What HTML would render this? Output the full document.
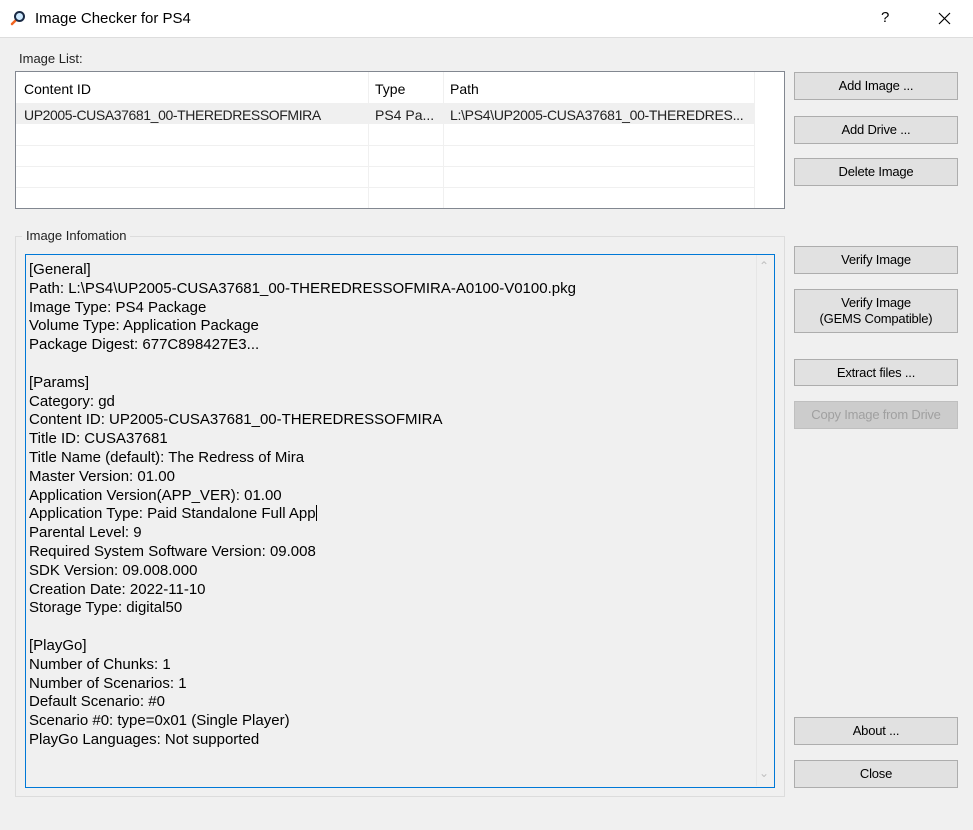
<!DOCTYPE html>
<html><head><meta charset="utf-8"><style>
*{margin:0;padding:0;box-sizing:border-box}
body{width:973px;height:830px;background:#f0f0f0;font-family:"Liberation Sans",sans-serif;color:#000;position:relative;overflow:hidden;font-size:13px}
.a{position:absolute}
.title{left:0;top:0;width:973px;height:38px;background:#fff;border-bottom:1px solid #ddd}
.btn{position:absolute;left:794px;width:164px;background:#e1e1e1;border:1px solid #adadad;text-align:center;font-size:13px;display:flex;align-items:center;justify-content:center;line-height:16px;letter-spacing:-0.2px}
.list{left:15px;top:71px;width:770px;height:138px;background:#fff;border:1px solid #828790}
.vl{position:absolute;top:0;width:1px;height:136px;background:#f0f0f0}
.hl{position:absolute;left:0;width:738px;height:1px;background:#f0f0f0}
.txt{left:25px;top:254px;width:750px;height:534px;border:1px solid #0078d7;background:#f0f0f0;padding:6px 0 0 3px;font-size:15px;line-height:18.8px;white-space:pre}
</style></head><body>
<div class="a title"></div>
<svg class="a" style="left:10px;top:10px" width="16" height="16" viewBox="0 0 16 16"><line x1="2" y1="14" x2="6" y2="10" stroke="#f26522" stroke-width="2.5" stroke-linecap="round"/><circle cx="9.5" cy="6.5" r="4.5" fill="#cfeaff" stroke="#1a2a44" stroke-width="2"/></svg>
<div class="a" style="left:35px;top:10px;font-size:15px">Image Checker for PS4</div>
<div class="a" style="left:881px;top:9px;font-size:15px">?</div>
<svg class="a" style="left:938px;top:12px" width="13" height="13"><path d="M1 1L12 12M12 1L1 12" stroke="#000" stroke-width="1.2"/></svg>
<div class="a" style="left:19px;top:51px;font-size:13px;color:#222">Image List:</div>
<div class="a list">
<div class="a" style="left:0;top:31px;width:738px;height:21px;background:#f0f0f0"></div>
<div class="vl" style="left:352px"></div><div class="vl" style="left:427px"></div><div class="vl" style="left:738px"></div>
<div class="hl" style="top:73px"></div><div class="hl" style="top:94px"></div><div class="hl" style="top:115px"></div>
<div class="a" style="left:8px;top:9px;font-size:14px">Content ID</div>
<div class="a" style="left:359px;top:9px;font-size:14px">Type</div>
<div class="a" style="left:434px;top:9px;font-size:14px">Path</div>
<div class="a" style="left:8px;top:35px;font-size:14px;color:#222;letter-spacing:-0.4px">UP2005-CUSA37681_00-THEREDRESSOFMIRA</div>
<div class="a" style="left:359px;top:35px;font-size:14px;color:#222">PS4 Pa...</div>
<div class="a" style="left:434px;top:35px;font-size:14px;color:#222;letter-spacing:-0.3px">L:\PS4\UP2005-CUSA37681_00-THEREDRES...</div>
</div>
<div class="a" style="left:15px;top:236px;width:770px;height:561px;border:1px solid #dcdcdc"></div>
<div class="a" style="left:22px;top:228px;padding:0 4px;background:#f0f0f0;font-size:13px;color:#222">Image Infomation</div>
<div class="a txt">[General]
Path: L:\PS4\UP2005-CUSA37681_00-THEREDRESSOFMIRA-A0100-V0100.pkg
Image Type: PS4 Package
Volume Type: Application Package
Package Digest: 677C898427E3...

[Params]
Category: gd
Content ID: UP2005-CUSA37681_00-THEREDRESSOFMIRA
Title ID: CUSA37681
Title Name (default): The Redress of Mira
Master Version: 01.00
Application Version(APP_VER): 01.00
Application Type: Paid Standalone Full App<span style="display:inline-block;width:1px;height:16px;background:#000;vertical-align:-3px"></span>
Parental Level: 9
Required System Software Version: 09.008
SDK Version: 09.008.000
Creation Date: 2022-11-10
Storage Type: digital50

[PlayGo]
Number of Chunks: 1
Number of Scenarios: 1
Default Scenario: #0
Scenario #0: type=0x01 (Single Player)
PlayGo Languages: Not supported</div>
<div class="a" style="left:756px;top:255px;width:1px;height:531px;background:#e6e6e6"></div>
<div class="a" style="left:759px;top:259px;color:#c0c0c0;font-size:12px">&#8963;</div>
<div class="a" style="left:759px;top:766px;color:#c0c0c0;font-size:12px">&#8964;</div>
<div class="btn" style="top:72px;height:28px">Add Image ...</div>
<div class="btn" style="top:116px;height:28px">Add Drive ...</div>
<div class="btn" style="top:158px;height:28px">Delete Image</div>
<div class="btn" style="top:246px;height:28px">Verify Image</div>
<div class="btn" style="top:289px;height:44px">Verify Image<br>(GEMS Compatible)</div>
<div class="btn" style="top:359px;height:27px">Extract files ...</div>
<div class="btn" style="top:401px;height:28px;background:#cccccc;border-color:#bfbfbf;color:#a0a0a0">Copy Image from Drive</div>
<div class="btn" style="top:717px;height:28px">About ...</div>
<div class="btn" style="top:760px;height:28px">Close</div>
</body></html>
